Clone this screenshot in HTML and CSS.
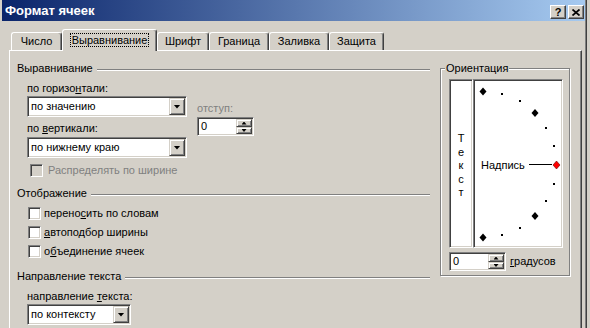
FILE: index.html
```html
<!doctype html>
<html>
<head>
    <meta charset='utf-8'>
    <title>Формат ячеек</title>
    <link rel="stylesheet" href="styles.css">
</head>
<body>
<div class='window'>
    <div class='titlebar'>
        <span class='title'>Формат ячеек</span>
        <span class='tbtn help'>?</span>
        <span class='tbtn close'><svg width='8' height='7' viewBox='0 0 8 7'><path d='M0.5 0.5L7.5 6.5M7.5 0.5L0.5 6.5' stroke='#000' stroke-width='1.7'/></svg></span>
    </div>
    <div class='client'>
        <div class='tabs'>
            <div class='tab t1'>Число</div>
            <div class='tab t2 active'><span class='focus'>Выравнивание</span></div>
            <div class='tab t3'>Шрифт</div>
            <div class='tab t4'>Граница</div>
            <div class='tab t5'>Заливка</div>
            <div class='tab t6'>Защита</div>
        </div>
        <div class='panel'>
            <div class='leftcol'>
                <div class='group'><span>Выравнивание</span><i class='etch'></i></div>
                <div class='alignrow'>
                    <div class='aligncol'>
                        <div class='label'>по горизо<u>н</u>тали:</div>
                        <div class='combo c1'><span class='val'>по значению</span><span class='drop'><i></i></span></div>
                        <div class='label l2'>по <u>в</u>ертикали:</div>
                        <div class='combo c2'><span class='val'>по нижнему краю</span><span class='drop'><i></i></span></div>
                    </div>
                    <div class='indentcol'>
                        <div class='label gray'>отступ:</div>
                        <div class='spin s1'><span class='val'>0</span><span class='arrows'><b class='up'><i></i></b><b class='down'><i></i></b></span></div>
                    </div>
                </div>
                <div class='check disabled'><span class='box'></span>Распределять по ширине</div>

                <div class='group g2'><span>Отображение</span><i class='etch'></i></div>
                <div class='check first'><span class='box'></span>перено<u>с</u>ить по словам</div>
                <div class='check'><span class='box'></span><u>а</u>втоподбор ширины</div>
                <div class='check'><span class='box'></span>о<u>б</u>ъединение ячеек</div>

                <div class='group g3'><span>Направление текста</span><i class='etch'></i></div>
                <div class='label l3'>направление <u>т</u>екста:</div>
                <div class='combo c3'><span class='val'>по контексту</span><span class='drop'><i></i></span></div>
            </div>

            <div class='frame'>
                <div class='legend'>Ориентация</div>
                <div class='boxes'>
                    <div class='vbox'>
                        <span>Т</span><span>е</span><span>к</span><span>с</span><span>т</span>
                    </div>
                    <div class='dial'>
                        <svg width='86' height='165' viewBox='0 0 86 165'>
                            <g fill='#000'>
                                <path d='M8 6.5L11.5 10.5L8 14.5L4.5 10.5Z'/>
                                <rect x='26' y='12' width='2' height='2'/>
                                <rect x='44' y='19' width='2' height='2'/>
                                <path d='M60 28L63.5 32L60 36L56.5 32Z'/>
                                <rect x='70' y='46' width='2' height='2'/>
                                <rect x='78' y='64' width='2' height='2'/>
                                <rect x='78' y='102' width='2' height='2'/>
                                <rect x='70' y='119' width='2' height='2'/>
                                <path d='M60 131L63.5 135L60 139L56.5 135Z'/>
                                <rect x='44' y='146' width='2' height='2'/>
                                <rect x='26' y='153' width='2' height='2'/>
                                <path d='M8 152.5L11.5 156.5L8 160.5L4.5 156.5Z'/>
                            </g>
                            <text class='cap' x='6' y='88'>Надпись</text>
                            <rect x='54' y='83' width='23' height='1' fill='#000'/>
                            <path d='M81.5 80L85 84L81.5 88L78 84Z' fill='#f00' stroke='#600' stroke-width='0.6'/>
                        </svg>
                    </div>
                </div>
                <div class='degrow'>
                    <div class='spin s2'><span class='val'>0</span><span class='arrows'><b class='up'><i></i></b><b class='down'><i></i></b></span></div>
                    <span class='deg'><u>г</u>радусов</span>
                </div>
            </div>
        </div>
    </div>
</div>
</body>
</html>
```

FILE: styles.css
```css
*{margin:0;padding:0;box-sizing:border-box;}
body{background:#d4d0c8;font:11px/13px "Liberation Sans",Arial,sans-serif;color:#000;width:590px;height:328px;overflow:hidden;}
u{text-decoration:underline;text-underline-offset:1px;}

.window{width:586px;height:328px;padding-left:2px;border-right:1px solid #808080;box-shadow:1px 0 0 #404040;}

/* title */
.titlebar{width:583px;height:21px;padding:2px 1px 0 3px;display:flex;align-items:flex-start;background:linear-gradient(to right,#0a246a,#a6caf0);}
.title{flex:1;color:#fff;font-weight:bold;font-size:13px;line-height:18px;}
.tbtn{width:16px;height:14px;margin-top:3px;display:flex;align-items:center;justify-content:center;background:#d4d0c8;font-weight:bold;font-size:11px;
    border:1px solid;border-color:#fff #404040 #404040 #fff;box-shadow:inset -1px -1px #808080;}
.help{margin-right:2px;}

/* tabs */
.client{padding-left:7px;}
.tabs{height:21px;margin-top:8px;padding-left:2px;display:flex;align-items:flex-end;}
.tab{height:18px;padding-top:2px;text-align:center;background:#d4d0c8;
    border:1px solid;border-color:#fff #404040 transparent #fff;border-bottom:none;border-radius:3px 3px 0 0;box-shadow:inset -1px 0 #808080;}
.tab.active{height:22px;margin-bottom:-1px;padding-top:4px;position:relative;z-index:1;}
.focus{outline:1px dotted #000;padding:0 1px;}
.t1{width:51px;}
.t2{width:95px;}
.t3{width:52px;}
.t4{width:60px;}
.t5{width:60px;}
.t6{width:55px;}

.panel{width:573px;height:290px;padding:11px 0 0 7px;display:flex;align-items:flex-start;
    border-top:1px solid #fff;border-left:1px solid #fff;border-right:1px solid #404040;box-shadow:inset -1px 0 #808080;}

/* left */
.leftcol{width:413px;}
.group{height:13px;display:flex;}
.etch{flex:1;height:2px;margin:7px 0 0 4px;border-top:1px solid #808080;border-bottom:1px solid #fff;}
.g2{margin-top:10px;}
.g3{margin-top:12px;}

.label{height:13px;white-space:nowrap;}
.gray{color:#808080;}
.alignrow{display:flex;margin-top:7px;}
.aligncol{padding-left:10px;width:170px;}
.l2{margin-top:5px;}
.l3{margin-top:7px;margin-left:10px;}
.indentcol{margin-left:10px;padding-top:20px;}

.combo{height:21px;display:flex;background:#fff;
    border:1px solid;border-color:#808080 #fff #fff #808080;box-shadow:inset 1px 1px #404040,inset -1px -1px #d4d0c8;padding:1px;}
.c1{width:160px;margin-top:1px;}
.c2{width:160px;margin-top:2px;}
.c3{width:104px;margin-top:1px;margin-left:10px;}
.val{flex:1;padding-left:2px;line-height:17px;}
.drop{width:16px;height:17px;display:flex;align-items:center;justify-content:center;background:#d4d0c8;
    border:1px solid;border-color:#d4d0c8 #404040 #404040 #d4d0c8;box-shadow:inset 1px 1px #fff,inset -1px -1px #808080;}
.drop i{width:7px;height:4px;background:#000;clip-path:polygon(0 0,100% 0,50% 100%);}

.spin{height:19px;display:flex;background:#fff;
    border:1px solid;border-color:#808080 #fff #fff #808080;box-shadow:inset 1px 1px #404040,inset -1px -1px #d4d0c8;padding:1px;}
.s1{width:57px;margin-top:2px;}
.s2{width:57px;}
.spin .val{line-height:15px;}
.arrows{width:16px;display:flex;flex-direction:column;}
.arrows b{display:flex;align-items:center;justify-content:center;background:#d4d0c8;
    border:1px solid;border-color:#d4d0c8 #404040 #404040 #d4d0c8;box-shadow:inset 1px 1px #fff,inset -1px -1px #808080;}
.arrows .up{height:8px;}
.arrows .down{height:7px;}
.arrows i{width:5px;height:3px;background:#000;}
.up i{clip-path:polygon(50% 0,100% 100%,0 100%);}
.down i{clip-path:polygon(0 0,100% 0,50% 100%);}

.check{height:13px;display:flex;align-items:center;margin-top:6px;padding-left:11px;white-space:nowrap;}
.check .box{width:13px;height:13px;margin-right:3px;background:#fff;
    border:1px solid;border-color:#808080 #fff #fff #808080;box-shadow:inset 1px 1px #404040,inset -1px -1px #d4d0c8;}
.check.first{margin-top:7px;}
.check.disabled{padding-left:13px;color:#808080;}
.check.disabled .box{background:#d4d0c8;margin-right:5px;}

/* orientation */
.frame{width:130px;margin:6px 0 0 10px;padding:0 0 4px 8px;display:flex;flex-direction:column;
    border:1px solid #808080;box-shadow:inset 1px 1px #fff,1px 1px #fff;}
.legend{align-self:flex-start;margin:-7px 0 0 -4px;padding:0 1px;height:13px;background:#d4d0c8;}
.boxes{display:flex;margin-top:4px;height:169px;}
.vbox,.dial{background:#fff;border:1px solid;border-color:#808080 #fff #fff #808080;box-shadow:inset 1px 1px #404040,inset -1px -1px #d4d0c8;padding:1px;}
.vbox{width:24px;padding-top:52px;display:flex;flex-direction:column;align-items:center;line-height:13.5px;}
.dial{width:90px;}
.dial svg{display:block;}
.cap{font:11px "Liberation Sans",Arial,sans-serif;fill:#000;}
.degrow{display:flex;align-items:center;margin-top:4px;}
.deg{margin-left:4px;}
```
